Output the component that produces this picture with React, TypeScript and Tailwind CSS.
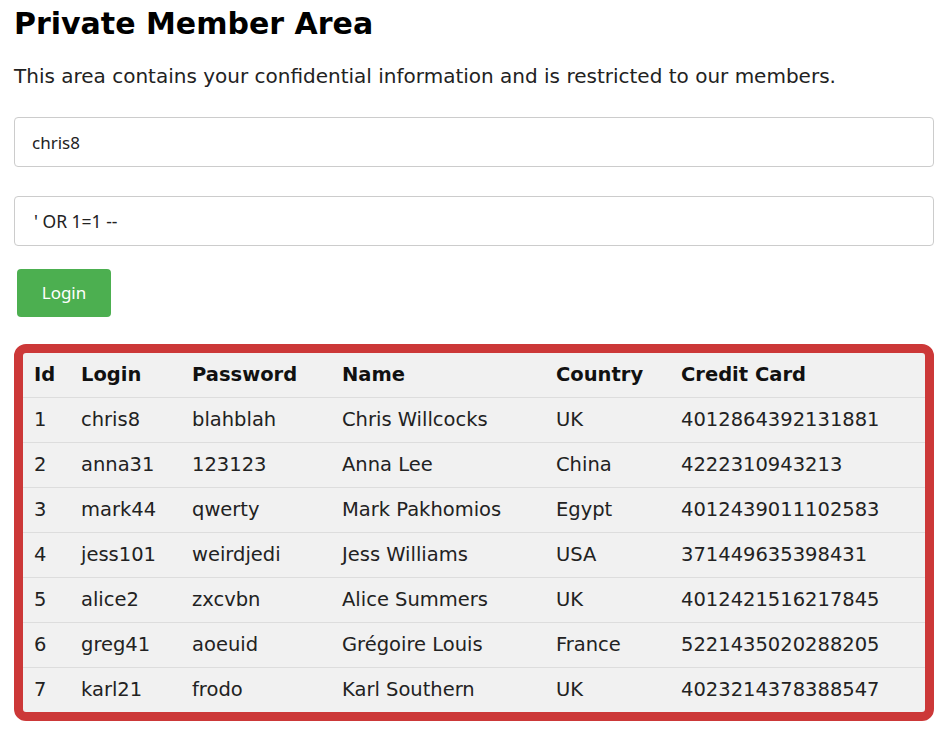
import React from "react";

const rows = [
  ["1", "chris8", "blahblah", "Chris Willcocks", "UK", "4012864392131881"],
  ["2", "anna31", "123123", "Anna Lee", "China", "4222310943213"],
  ["3", "mark44", "qwerty", "Mark Pakhomios", "Egypt", "4012439011102583"],
  ["4", "jess101", "weirdjedi", "Jess Williams", "USA", "371449635398431"],
  ["5", "alice2", "zxcvbn", "Alice Summers", "UK", "4012421516217845"],
  ["6", "greg41", "aoeuid", "Grégoire Louis", "France", "5221435020288205"],
  ["7", "karl21", "frodo", "Karl Southern", "UK", "4023214378388547"],
];

const headers = ["Id", "Login", "Password", "Name", "Country", "Credit Card"];
const widths = ["w-[47px]", "w-[111px]", "w-[150px]", "w-[214px]", "w-[125px]", "w-[255px]"];

export default function App() {
  return (
    <div
      className="w-[944px] h-[731px] bg-white pl-[14px] pr-[10px] text-[#222]"
      style={{ fontFamily: '"DejaVu Sans", sans-serif' }}
    >
      <h1 className="pt-[6px] text-[30px] leading-[36px] font-bold text-black">
        Private Member Area
      </h1>
      <p className="mt-[22px] text-[20px] leading-[24px] text-[#222]">
        This area contains your confidential information and is restricted to our members.
      </p>
      <div className="mt-[29px] flex flex-col">
        <input
          readOnly
          value="chris8"
          className="h-[50px] w-full rounded-[4px] border border-[#cccccc] bg-white pl-[17px] text-[17px] text-[#222] outline-none"
          style={{ fontFamily: '"Noto Sans", sans-serif' }}
        />
        <input
          readOnly
          value="' OR 1=1 --"
          className="mt-[29px] h-[50px] w-full rounded-[4px] border border-[#cccccc] bg-white pl-[19px] text-[17.5px] text-[#222] outline-none"
          style={{ fontFamily: '"Noto Sans", sans-serif' }}
        />
        <div className="mt-[23px] pl-[3px]">
          <button
            className="h-[48px] w-[94px] rounded-[4px] bg-[#4caf50] text-[17px] text-white"
            style={{ fontFamily: '"Noto Sans", sans-serif' }}
          >
            Login
          </button>
        </div>
      </div>
      <div className="mt-[27px] rounded-[12px] border-[9px] border-[#cc3838] bg-[#f1f1f1] overflow-hidden">
        <table className="w-[902px] table-fixed border-separate border-spacing-0 text-[19.5px]">
          <thead>
            <tr>
              {headers.map((h, i) => (
                <th
                  key={h}
                  className={`${widths[i]} h-[45px] border-b border-[#dddddd] pl-[11px] text-left align-middle font-bold text-[#111]`}
                >
                  {h}
                </th>
              ))}
            </tr>
          </thead>
          <tbody>
            {rows.map((r, ri) => (
              <tr key={r[0]}>
                {r.map((c, ci) => (
                  <td
                    key={ci}
                    className={
                      ri < rows.length - 1
                        ? "h-[45px] border-b border-[#dddddd] pl-[11px] text-left align-middle text-[#222]"
                        : "h-[44px] pl-[11px] text-left align-middle text-[#222]"
                    }
                  >
                    {c}
                  </td>
                ))}
              </tr>
            ))}
          </tbody>
        </table>
      </div>
    </div>
  );
}
